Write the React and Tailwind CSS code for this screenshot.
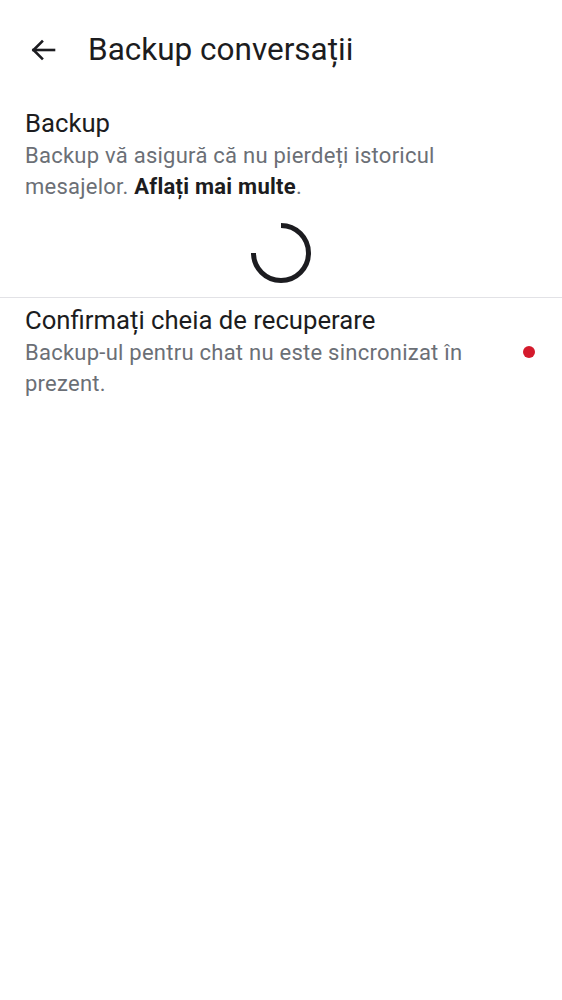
import React from 'react';

// Loading spinner: 270° arc, from 12 o'clock clockwise to 9 o'clock
const Spinner = () => (
    <svg width="64" height="64" viewBox="0 0 64 64" fill="none">
        <path d="M32 4.5 A27.5 27.5 0 1 1 4.5 32" stroke="#1c1c20" strokeWidth="5" />
    </svg>
);

const BackArrow = () => (
    <svg width="28" height="28" viewBox="0 0 28 28" fill="none" stroke="#1c1c20" strokeWidth="2.6" strokeLinecap="square">
        <path d="M25 14H4.5" />
        <path d="M13 5.5L4.5 14l8.5 8.5" />
    </svg>
);

export default function App() {
    return (
        <div className="min-h-screen bg-white font-['Roboto',sans-serif] text-[#1c1c20]">
            {/* Header */}
            <div className="h-[100px] flex items-center pl-[29px]">
                <BackArrow />
                <h1 className="ml-[31px] text-[31.5px] leading-none">Backup conversații</h1>
            </div>

            {/* Backup section */}
            <div className="pt-[8px] pl-[25px] pr-[40px]">
                <p className="text-[25.7px] leading-[31px]">Backup</p>
                <p className="pt-px text-[22px] leading-[31px] tracking-[0.25px] text-[#6b6f76]">
                    Backup vă asigură că nu pierdeți istoricul mesajelor. <b className="text-[#1c1c20]">Aflați mai multe</b>.
                </p>
            </div>
            <div className="flex justify-center pt-[19px] pb-[12px]">
                <Spinner />
            </div>

            <div className="h-px bg-[#e2e2e6]" />

            {/* Recovery key row */}
            <div className="flex items-center pt-[7px] pl-[25px] pr-[27px]">
                <div className="flex-1 pr-[40px]">
                    <p className="text-[25.7px] leading-[31px]">Confirmați cheia de recuperare</p>
                    <p className="pt-px text-[22px] leading-[31px] tracking-[0.25px] text-[#6b6f76]">
                        Backup-ul pentru chat nu este sincronizat în prezent.
                    </p>
                </div>
                <div className="w-[12px] h-[12px] rounded-full bg-[#d41a2c]" />
            </div>
        </div>
    );
}
